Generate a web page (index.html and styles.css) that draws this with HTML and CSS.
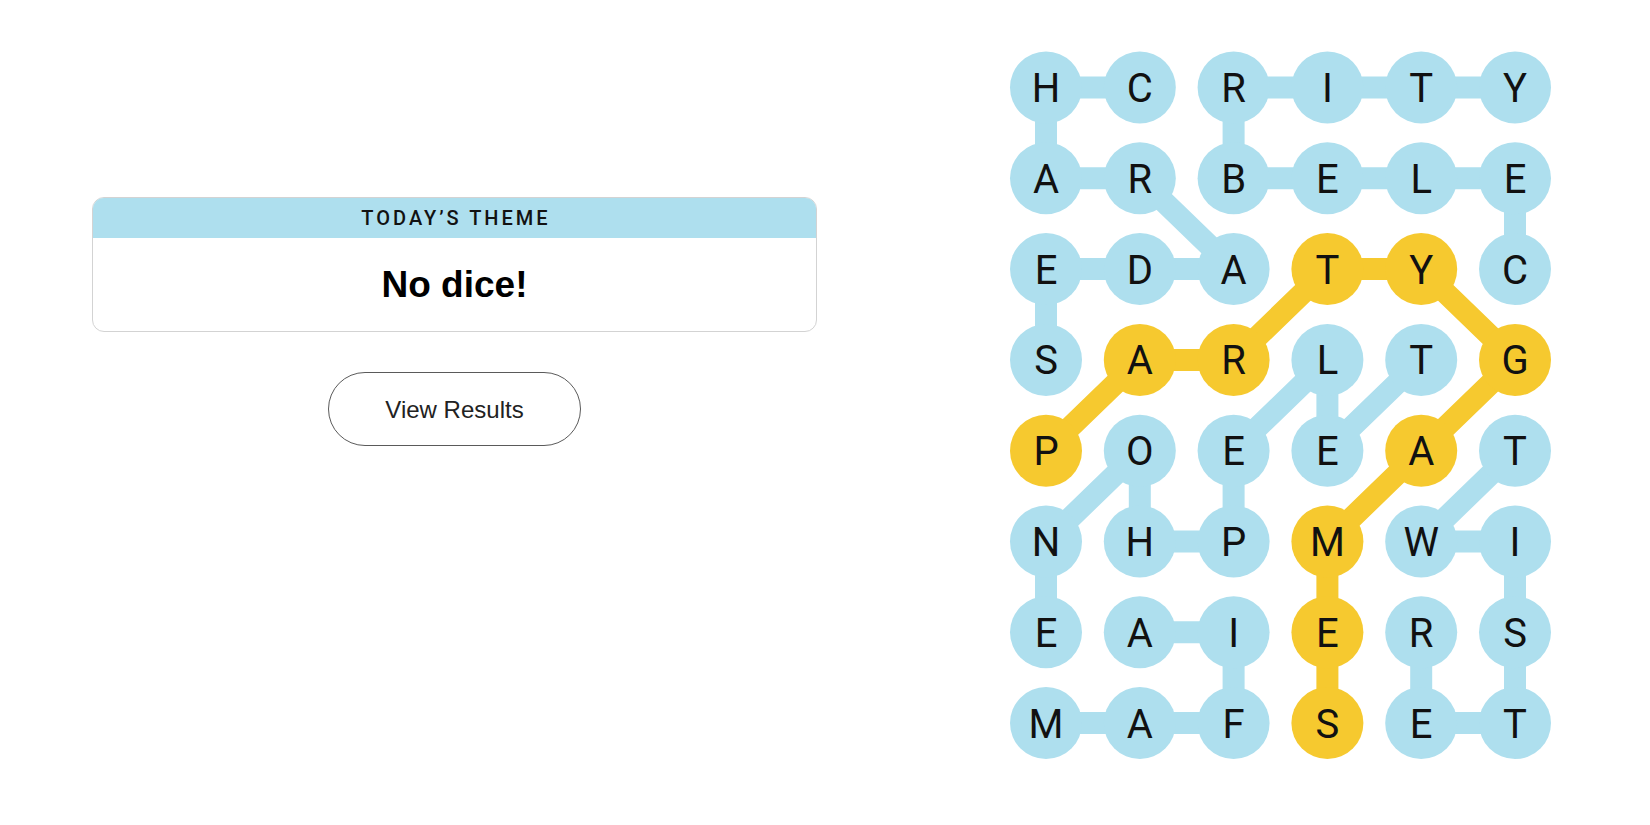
FILE: index.html
```html
<!DOCTYPE html>
<html lang="en">
<head>
<meta charset="utf-8">
<title>Strands</title>
<link rel="stylesheet" href="styles.css">
</head>
<body>
<main class="page">
  <section class="left">
    <div class="theme-card">
      <div class="theme-head">TODAY’S THEME</div>
      <div class="theme-body">No dice!</div>
    </div>
    <button class="results-btn" type="button">View Results</button>
  </section>
  <section class="board">
    <svg class="board-svg" width="560" height="740" viewBox="0 0 560 740" xmlns="http://www.w3.org/2000/svg">
      <g class="links-blue">
        <polyline points="139.8,47.5 46,47.5 46,138.3 139.8,138.3 233.6,229.1 139.8,229.1 46,229.1 46,319.9"/>
        <polyline points="515,229.1 515,138.3 421.2,138.3 327.4,138.3 233.6,138.3 233.6,47.5 327.4,47.5 421.2,47.5 515,47.5"/>
        <polyline points="421.2,319.9 327.4,410.7 327.4,319.9 233.6,410.7 233.6,501.5 139.8,501.5 139.8,410.7 46,501.5 46,592.3"/>
        <polyline points="46,683.1 139.8,683.1 233.6,683.1 233.6,592.3 139.8,592.3"/>
        <polyline points="515,410.7 421.2,501.5 515,501.5 515,592.3 515,683.1 421.2,683.1 421.2,592.3"/>
      </g>
      <g class="links-gold">
        <polyline points="46,410.7 139.8,319.9 233.6,319.9 327.4,229.1 421.2,229.1 515,319.9 421.2,410.7 327.4,501.5 327.4,592.3 327.4,683.1"/>
      </g>
      <g class="dots">
        <circle class="b" cx="46" cy="47.5" r="36"/><circle class="b" cx="139.8" cy="47.5" r="36"/><circle class="b" cx="233.6" cy="47.5" r="36"/><circle class="b" cx="327.4" cy="47.5" r="36"/><circle class="b" cx="421.2" cy="47.5" r="36"/><circle class="b" cx="515" cy="47.5" r="36"/>
        <circle class="b" cx="46" cy="138.3" r="36"/><circle class="b" cx="139.8" cy="138.3" r="36"/><circle class="b" cx="233.6" cy="138.3" r="36"/><circle class="b" cx="327.4" cy="138.3" r="36"/><circle class="b" cx="421.2" cy="138.3" r="36"/><circle class="b" cx="515" cy="138.3" r="36"/>
        <circle class="b" cx="46" cy="229.1" r="36"/><circle class="b" cx="139.8" cy="229.1" r="36"/><circle class="b" cx="233.6" cy="229.1" r="36"/><circle class="y" cx="327.4" cy="229.1" r="36"/><circle class="y" cx="421.2" cy="229.1" r="36"/><circle class="b" cx="515" cy="229.1" r="36"/>
        <circle class="b" cx="46" cy="319.9" r="36"/><circle class="y" cx="139.8" cy="319.9" r="36"/><circle class="y" cx="233.6" cy="319.9" r="36"/><circle class="b" cx="327.4" cy="319.9" r="36"/><circle class="b" cx="421.2" cy="319.9" r="36"/><circle class="y" cx="515" cy="319.9" r="36"/>
        <circle class="y" cx="46" cy="410.7" r="36"/><circle class="b" cx="139.8" cy="410.7" r="36"/><circle class="b" cx="233.6" cy="410.7" r="36"/><circle class="b" cx="327.4" cy="410.7" r="36"/><circle class="y" cx="421.2" cy="410.7" r="36"/><circle class="b" cx="515" cy="410.7" r="36"/>
        <circle class="b" cx="46" cy="501.5" r="36"/><circle class="b" cx="139.8" cy="501.5" r="36"/><circle class="b" cx="233.6" cy="501.5" r="36"/><circle class="y" cx="327.4" cy="501.5" r="36"/><circle class="b" cx="421.2" cy="501.5" r="36"/><circle class="b" cx="515" cy="501.5" r="36"/>
        <circle class="b" cx="46" cy="592.3" r="36"/><circle class="b" cx="139.8" cy="592.3" r="36"/><circle class="b" cx="233.6" cy="592.3" r="36"/><circle class="y" cx="327.4" cy="592.3" r="36"/><circle class="b" cx="421.2" cy="592.3" r="36"/><circle class="b" cx="515" cy="592.3" r="36"/>
        <circle class="b" cx="46" cy="683.1" r="36"/><circle class="b" cx="139.8" cy="683.1" r="36"/><circle class="b" cx="233.6" cy="683.1" r="36"/><circle class="y" cx="327.4" cy="683.1" r="36"/><circle class="b" cx="421.2" cy="683.1" r="36"/><circle class="b" cx="515" cy="683.1" r="36"/>
      </g>
      <g class="letters">
        <text x="46" y="62">H</text><text x="139.8" y="62">C</text><text x="233.6" y="62">R</text><text x="327.4" y="62">I</text><text x="421.2" y="62">T</text><text x="515" y="62">Y</text>
        <text x="46" y="152.8">A</text><text x="139.8" y="152.8">R</text><text x="233.6" y="152.8">B</text><text x="327.4" y="152.8">E</text><text x="421.2" y="152.8">L</text><text x="515" y="152.8">E</text>
        <text x="46" y="243.6">E</text><text x="139.8" y="243.6">D</text><text x="233.6" y="243.6">A</text><text x="327.4" y="243.6">T</text><text x="421.2" y="243.6">Y</text><text x="515" y="243.6">C</text>
        <text x="46" y="334.4">S</text><text x="139.8" y="334.4">A</text><text x="233.6" y="334.4">R</text><text x="327.4" y="334.4">L</text><text x="421.2" y="334.4">T</text><text x="515" y="334.4">G</text>
        <text x="46" y="425.2">P</text><text x="139.8" y="425.2">O</text><text x="233.6" y="425.2">E</text><text x="327.4" y="425.2">E</text><text x="421.2" y="425.2">A</text><text x="515" y="425.2">T</text>
        <text x="46" y="516">N</text><text x="139.8" y="516">H</text><text x="233.6" y="516">P</text><text x="327.4" y="516">M</text><text x="421.2" y="516">W</text><text x="515" y="516">I</text>
        <text x="46" y="606.8">E</text><text x="139.8" y="606.8">A</text><text x="233.6" y="606.8">I</text><text x="327.4" y="606.8">E</text><text x="421.2" y="606.8">R</text><text x="515" y="606.8">S</text>
        <text x="46" y="697.6">M</text><text x="139.8" y="697.6">A</text><text x="233.6" y="697.6">F</text><text x="327.4" y="697.6">S</text><text x="421.2" y="697.6">E</text><text x="515" y="697.6">T</text>
      </g>
    </svg>
  </section>
</main>
</body>
</html>
```

FILE: styles.css
```css
* { box-sizing: border-box; }

html, body {
  margin: 0;
  padding: 0;
  background: #ffffff;
  font-family: "Liberation Sans", Arial, sans-serif;
  color: #121212;
}

.page {
  display: flex;
  align-items: flex-start;
  width: 1650px;
  height: 825px;
  padding-top: 40px;
}

.left {
  display: flex;
  flex-direction: column;
  align-items: center;
  width: 725px;
  margin-left: 92px;
  padding-top: 157px;
}

.theme-card {
  width: 725px;
  border: 1px solid #d3d3d3;
  border-radius: 12px;
  overflow: hidden;
  background: #fff;
}

.theme-head {
  height: 41px;
  margin: -1px -1px 0 -1px;
  background: #aedfee;
  display: flex;
  align-items: center;
  justify-content: center;
  font-family: Roboto, "Liberation Sans", Arial, sans-serif;
  font-size: 20px;
  font-weight: 500;
  letter-spacing: 3px;
  color: #121212;
  padding-left: 3px;
}

.theme-body {
  height: 93px;
  display: flex;
  align-items: center;
  justify-content: center;
  font-size: 37px;
  font-weight: 700;
  color: #000;
}

.results-btn {
  margin-top: 40px;
  width: 253px;
  height: 74px;
  padding-top: 3px;
  border: 1px solid #5a5a5a;
  border-radius: 37px;
  background: #fff;
  font-family: "Liberation Sans", Arial, sans-serif;
  font-size: 24px;
  color: #222;
  cursor: pointer;
}

.board {
  margin-left: 183px;
}

.board-svg {
  display: block;
}

.links-blue polyline {
  fill: none;
  stroke: #aedfee;
  stroke-width: 22;
  stroke-linejoin: round;
}

.links-gold polyline {
  fill: none;
  stroke: #f6c92f;
  stroke-width: 22;
  stroke-linejoin: round;
}

.dots .b { fill: #aedfee; }
.dots .y { fill: #f6c92f; }

.letters text {
  font-family: Roboto, "Liberation Sans", Arial, sans-serif;
  font-size: 40px;
  font-weight: 400;
  fill: #111;
  text-anchor: middle;
}
```
